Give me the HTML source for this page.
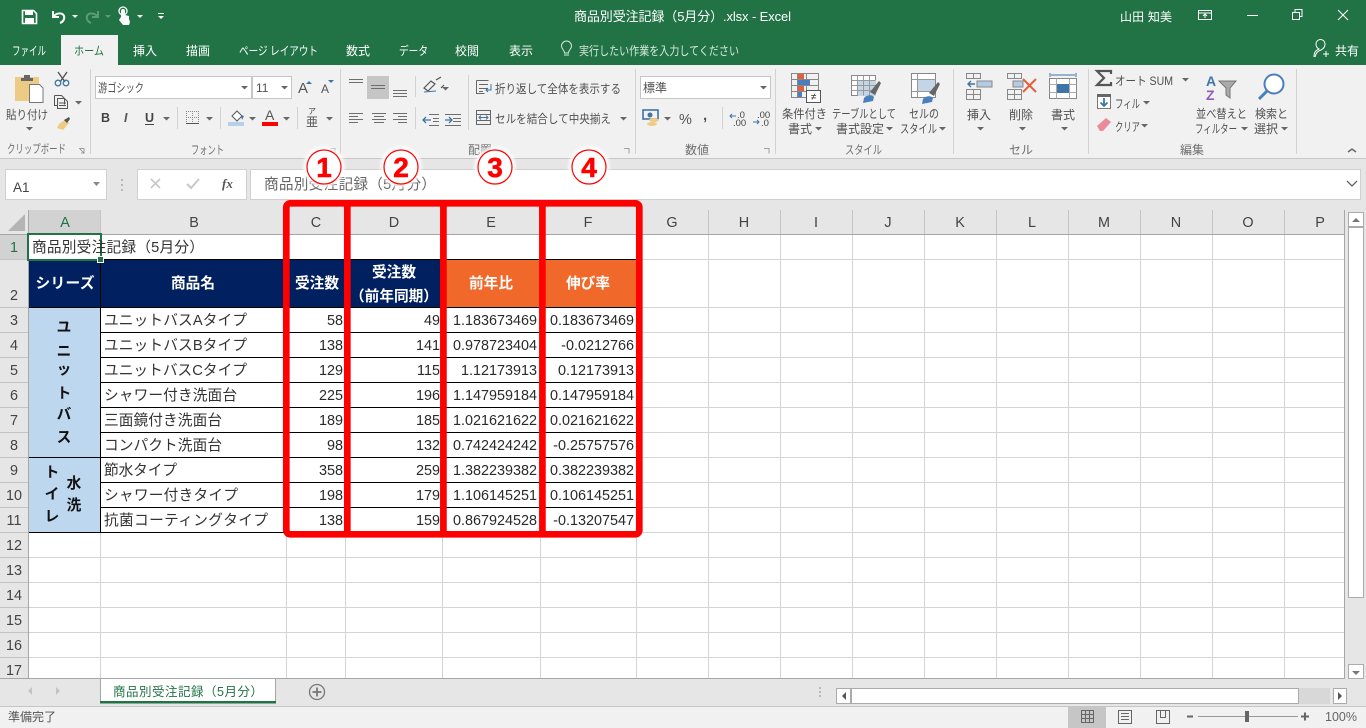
<!DOCTYPE html>
<html lang="ja"><head><meta charset="utf-8"><title>商品別受注記録（5月分）.xlsx - Excel</title>
<style>
html,body{margin:0;padding:0;width:1366px;height:728px;overflow:hidden;background:#e6e6e6}
svg{display:block}
text{font-family:"Liberation Sans","Noto Sans CJK JP",sans-serif}
.r{font-size:12px;fill:#505050}
.g{font-size:12px;fill:#707070}
.t{font-size:12px;fill:#fff}
.c{font-size:14.67px;fill:#333}
.n{font-size:14.4px;fill:#2a2a2a;text-anchor:end}
.h{font-size:14.4px;fill:#444;text-anchor:middle}
.w{font-size:14.67px;fill:#fff;font-weight:700;text-anchor:middle}
.v{font-size:14.67px;fill:#111;font-weight:700;text-anchor:middle}
.circ{font-size:28px;font-weight:700;fill:#f00;text-anchor:middle;stroke:#f00;stroke-width:.6}
</style></head><body>
<svg width="1366" height="728" viewBox="0 0 1366 728" xmlns="http://www.w3.org/2000/svg">
<defs>
<path id="k" d="M0 0h7l-3.500 3.500z" fill="#666"/>
<filter id="sh" x="-30%" y="-30%" width="160%" height="160%"><feGaussianBlur stdDeviation="1.500"/></filter>
</defs>

<!-- title bar and tabs -->
<rect width="1366" height="65" fill="#217346"/>
<rect y="65" width="1366" height="93" fill="#f1f1f1"/>
<rect y="158" width="1366" height="1" fill="#c6c6c6"/>
<rect y="159" width="1366" height="51" fill="#e6e6e6"/>
<rect x="61" y="35" width="57" height="30" fill="#f1f1f1"/>

<!-- QAT -->
<path d="M22.500 10.500h11l3 3v10h-14z" fill="none" stroke="#fff" stroke-width="1.600"/>
<rect x="25" y="10" width="8" height="5" fill="#fff"/><rect x="25" y="18" width="9" height="5" fill="#fff"/>
<path d="M53 11v6h6M53.500 16.500c3-4 9-4 10.500-.5 1 3-1 6-4 7" fill="none" stroke="#fff" stroke-width="2"/>
<path d="M72 15h6l-3 3z" fill="#fff"/>
<path d="M98 11v6h-6M97.500 16.500c-3-4-9-4-10.500-.5-1 3 1 6 4 7" fill="none" stroke="#5c9a78" stroke-width="2"/>
<path d="M105 15h6l-3 3z" fill="#5c9a78"/>
<path d="M121 17v-6a2 2 0 0 1 4 0v4l4 1v3l1 3-1 3h-6l-4-5z" fill="#fff"/><circle cx="123" cy="11" r="4" fill="none" stroke="#fff" stroke-width="1.300"/>
<path d="M137 15h6l-3 3z" fill="#fff"/>
<path d="M158 13h6v1h-6zM158 16h6l-3 3z" fill="#fff"/>

<text class="t" x="574" y="21" style="font-size:13px" textLength="217" lengthAdjust="spacing">商品別受注記録（5月分）.xlsx  -  Excel</text>
<text class="t" x="1120" y="21" textLength="52" lengthAdjust="spacing">山田 知美</text>
<path d="M1198.500 10.500h13v9h-13zM1198.500 13h13M1205 18v-4M1203 16l2-2 2 2" fill="none" stroke="#fff"/>
<path d="M1247 15.500h11" stroke="#fff"/>
<path d="M1292.500 12.500h7v7h-7zM1295 12v-2.500h7v7h-2.500" fill="none" stroke="#fff"/>
<path d="M1338 10l10 10M1348 10l-10 10" stroke="#fff" stroke-width="1.100"/>

<text class="t" x="12" y="55" textLength="34" lengthAdjust="spacingAndGlyphs">ファイル</text>
<text class="t" x="74" y="55" textLength="30" lengthAdjust="spacingAndGlyphs" style="fill:#217346">ホーム</text>
<text class="t" x="133" y="55">挿入</text>
<text class="t" x="186" y="55">描画</text>
<text class="t" x="239" y="55" textLength="79" lengthAdjust="spacingAndGlyphs">ページ レイアウト</text>
<text class="t" x="346" y="55">数式</text>
<text class="t" x="399" y="55" textLength="29" lengthAdjust="spacingAndGlyphs">データ</text>
<text class="t" x="455" y="55">校閲</text>
<text class="t" x="509" y="55">表示</text>
<path d="M564 55h5M564.500 53h4c0-3 3-4 3-7a5 5 0 0 0-10 0c0 3 3 4 3 7z" fill="none" stroke="#d8e8de"/>
<text x="579" y="55" style="font-size:12px;fill:#d8e8de" textLength="160" lengthAdjust="spacingAndGlyphs">実行したい作業を入力してください</text>
<path d="M1314 57c0-6 3-7 5-8-2-1-3-3-3-5a4.500 4.500 0 0 1 9 0c0 3-2 5-4 6-2 .5-5 2-6 7M1323 54h6M1326 51v6" fill="none" stroke="#fff"/>
<text class="t" x="1335" y="55">共有</text>

<!-- ribbon separators -->
<g stroke="#d2d2d2">
<path d="M90.500 69v85M340.500 69v85M635.500 69v85M775.500 69v85M953.500 69v85M1088.500 69v85M1296.500 69v85"/>
<path d="M177.500 107v22M220.500 107v22M297.500 107v22M415.500 76v21M415.500 107v22M468.500 75v55M722.500 107v22"/>
</g>

<!-- clipboard -->
<path d="M15 77h24v24H15z" fill="#eecb85"/>
<path d="M24 75h6v3h3v3H21v-3h3z" fill="#666"/>
<path d="M29.500 84.500h10l3.500 3.500v14.500H29.500z" fill="#fff" stroke="#777"/>
<text class="r" x="6" y="119" textLength="42" lengthAdjust="spacingAndGlyphs">貼り付け</text>
<use href="#k" x="26" y="127"/>
<path d="M58 72l7 10M67 72l-7 10" stroke="#555" stroke-width="1.400"/>
<circle cx="58" cy="83" r="2.800" fill="none" stroke="#3f74a8" stroke-width="1.300"/><circle cx="66" cy="83" r="2.800" fill="none" stroke="#3f74a8" stroke-width="1.300"/>
<path d="M54.500 95.500h7l3 3v6M57.500 98.500h7l3 3v7h-10zM54.500 95.500v10h3M59 103h7M59 105.500h7" fill="none" stroke="#555"/>
<use href="#k" x="75" y="101"/>
<path d="M59 124l7-5 3 4-6 7-6-2z" fill="#eecb85"/><path d="M64 120l5-3 1 2-3 4z" fill="#555"/>

<!-- font -->
<text class="g" x="7" y="153" textLength="59" lengthAdjust="spacingAndGlyphs">クリップボード</text>
<path d="M79 148.500h5v5M84 153l-4-4M81 153h3v-3" fill="none" stroke="#888" stroke-width=".8"/>
<rect x="95.500" y="76.500" width="156" height="22" fill="#fff" stroke="#c6c6c6"/>
<rect x="252.500" y="76.500" width="39" height="22" fill="#fff" stroke="#c6c6c6"/>
<text class="r" x="98" y="92" textLength="46" lengthAdjust="spacingAndGlyphs">游ゴシック</text>
<use href="#k" x="241" y="86"/>
<text class="r" x="256" y="92">11</text>
<use href="#k" x="281" y="86"/>
<text x="298" y="93" style="font-size:15px;fill:#555">A</text><path d="M306 84h6l-3-3z" fill="#3f74a8"/>
<text x="321" y="93" style="font-size:12px;fill:#555">A</text><path d="M328 80h6l-3 3z" fill="#3f74a8"/>
<text x="101" y="122" style="font-size:12.500px;font-weight:700;fill:#444">B</text>
<text x="124" y="122" style="font-size:12.500px;font-style:italic;font-weight:700;fill:#555">I</text>
<text x="145" y="122" style="font-size:12.500px;font-weight:700;fill:#444">U</text><path d="M145 124.500h9" stroke="#444"/>
<use href="#k" x="163" y="117"/>
<path d="M186 111.500h13M186 117.500h13M186 123.500h13M186.500 111v13M192.500 111v13M198.500 111v13" stroke="#888" stroke-dasharray="1 1" fill="none"/><path d="M186 123.500h13" stroke="#555"/>
<use href="#k" x="206" y="117"/>
<rect x="228" y="122" width="16" height="4" fill="#b4d0ea"/>
<path d="M232 116l5-5 5 5-5 5z" fill="#fff" stroke="#555"/><path d="M241 115l3 1-2 4z" fill="#3f74a8"/>
<use href="#k" x="249" y="117"/>
<text x="265" y="120" style="font-size:14px;fill:#555">A</text><rect x="262" y="122" width="16" height="4" fill="#f00"/>
<use href="#k" x="283" y="117"/>
<text x="308" y="114" style="font-size:8px;fill:#444">ア</text>
<text x="306" y="126" style="font-size:12px;fill:#555">亜</text>
<use href="#k" x="326" y="117"/>
<text class="g" x="191" y="154" textLength="33" lengthAdjust="spacingAndGlyphs">フォント</text>
<path d="M330 148.500h5v5" fill="none" stroke="#888" stroke-width=".8"/>

<!-- alignment -->
<rect x="367" y="76" width="22" height="23" fill="#c6c6c6"/>
<path d="M349 79.500h14M349 82.500h14M371 85.500h14M371 88.500h14M393 90.500h14M393 93.500h14M393 96.500h14" stroke="#6e6e6e"/>
<path d="M349 113.500h14M349 116.500h9M349 119.500h14M349 122.500h9M372 113.500h14M374 116.500h10M372 119.500h14M374 122.500h10M393 113.500h14M398 116.500h9M393 119.500h14M398 122.500h9" stroke="#6e6e6e"/>
<path d="M424 88l7-7 4 3-7 7zM436 80l5-3M441 88l3-3" fill="none" stroke="#555" stroke-width="1.200"/><path d="M424 92l12-1" stroke="#3f74a8"/>
<use href="#k" x="442" y="87"/>
<path d="M429 114.500h10M433 118.500h6M433 121.500h6M429 125.500h10" stroke="#6e6e6e"/>
<path d="M423 120h8M426 117l-3 3 3 3" fill="none" stroke="#3f74a8" stroke-width="1.300"/>
<path d="M445 114.500h16M453 118.500h8M453 121.500h8M445 125.500h16" stroke="#6e6e6e"/>
<path d="M445 120h7M449 117l3 3-3 3" fill="none" stroke="#3f74a8" stroke-width="1.300"/>
<path d="M476.500 80.500h12M476.500 80.500v13h8M479 84.500h9M479 88.500h9M479 91.500h4" fill="none" stroke="#666"/>
<path d="M491 84v6h-5M488 88l-2 2 2 2" fill="none" stroke="#3f74a8"/>
<text class="r" x="495" y="93" textLength="126" lengthAdjust="spacingAndGlyphs">折り返して全体を表示する</text>
<path d="M476.500 110.500h14v14h-14zM476.500 114.500h14M476.500 120.500h14" fill="none" stroke="#666"/>
<path d="M479 117.500h9M481 115.500l-2 2 2 2M486 115.500l2 2-2 2" fill="none" stroke="#3f74a8"/>
<text class="r" x="495" y="123" textLength="116" lengthAdjust="spacingAndGlyphs">セルを結合して中央揃え</text>
<use href="#k" x="620" y="117"/>
<text class="g" x="468" y="154">配置</text>
<path d="M624 148.500h5v5" fill="none" stroke="#888" stroke-width=".8"/>

<!-- number -->
<rect x="640.500" y="76.500" width="130" height="22" fill="#fff" stroke="#c6c6c6"/>
<text class="r" x="643" y="92">標準</text>
<use href="#k" x="760" y="86"/>
<rect x="643" y="110" width="15" height="9" fill="none" stroke="#3f74a8" stroke-width="1.600"/><circle cx="650" cy="115" r="2.500" fill="#3f74a8"/>
<ellipse cx="654" cy="120" rx="5" ry="2" fill="#eecb85"/><ellipse cx="652" cy="124" rx="5" ry="2" fill="#eecb85"/>
<use href="#k" x="664" y="117"/>
<text x="679" y="124" style="font-size:14.500px;fill:#555">%</text>
<text x="703" y="120" style="font-size:15px;font-weight:700;fill:#555">,</text>
<text x="737" y="118" style="font-size:9.500px;fill:#444">.0</text><text x="733" y="126" style="font-size:9.500px;fill:#444">.00</text>
<path d="M730 116h6M732 114l-2 2 2 2" fill="none" stroke="#3f74a8"/>
<text x="757" y="118" style="font-size:9.500px;fill:#444">.00</text><text x="761" y="126" style="font-size:9.500px;fill:#444">.0</text>
<path d="M753 122h6M757 120l2 2-2 2" fill="none" stroke="#3f74a8"/>
<text class="g" x="685" y="154">数値</text>
<path d="M764 148.500h5v5" fill="none" stroke="#888" stroke-width=".8"/>

<!-- styles -->
<g fill="none" stroke="#888"><path d="M791.500 73.500h27v24h-27zM791.500 79.500h27M791.500 85.500h27M791.500 91.500h27M797.500 73.500v24M806.500 73.500v24"/></g>
<rect x="798" y="74" width="6" height="5" fill="#e0613b"/><rect x="798" y="80" width="12" height="5" fill="#4a7fbd"/><rect x="798" y="86" width="6" height="5" fill="#e0613b"/><rect x="798" y="92" width="4" height="5" fill="#4a7fbd"/>
<rect x="806.500" y="90.500" width="14" height="12" fill="#fff" stroke="#555"/><text x="813.500" y="100" style="font-size:10px;fill:#333;text-anchor:middle">≠</text>
<text class="r" x="782" y="118" textLength="45" lengthAdjust="spacingAndGlyphs">条件付き</text>
<text class="r" x="788" y="133">書式</text><use href="#k" x="815" y="127"/>
<rect x="851.500" y="75.500" width="24" height="20" fill="#fff" stroke="#888"/>
<rect x="858" y="80" width="18" height="16" fill="#c5d5e8"/>
<path d="M851.500 80.500h24M851.500 85.500h24M851.500 90.500h24M857.500 75.500v20M863.500 75.500v20M869.500 75.500v20" stroke="#999" fill="none"/>
<path d="M870 92l9-11 2 2-6 12z" fill="#666"/><path d="M864 98c2-3 8-4 10-1l-1 4-10 2z" fill="#4a7fbd"/>
<text class="r" x="832" y="118" textLength="64" lengthAdjust="spacingAndGlyphs">テーブルとして</text>
<text class="r" x="836" y="133">書式設定</text><use href="#k" x="886" y="127"/>
<rect x="911.500" y="73.500" width="24" height="24" fill="#fff" stroke="#888"/>
<rect x="917" y="79" width="18" height="12" fill="#c5d5e8"/>
<path d="M911.500 79.500h24M911.500 91.500h24M917.500 73.500v24" stroke="#999" fill="none"/>
<path d="M929 93l9-11 2 2-6 12z" fill="#666"/><path d="M923 99c2-3 8-4 10-1l-1 4-10 2z" fill="#4a7fbd"/>
<text class="r" x="909" y="118" textLength="30" lengthAdjust="spacingAndGlyphs">セルの</text>
<text class="r" x="900" y="133" textLength="37" lengthAdjust="spacingAndGlyphs">スタイル</text><use href="#k" x="939" y="127"/>
<text class="g" x="845" y="154" textLength="37" lengthAdjust="spacingAndGlyphs">スタイル</text>

<!-- cells -->
<path d="M966.500 73.500h14v5h-14zM973.500 73.500v5M966.500 89.500h14v10h-14zM966.500 94.500h14M973.500 89.500v10" fill="none" stroke="#888"/>
<rect x="977" y="81" width="15" height="6" fill="#b4cbe4" stroke="#888"/>
<path d="M968 84h7M971 81l-3 3 3 3" fill="none" stroke="#3f74a8" stroke-width="1.400"/>
<text class="r" x="967" y="119">挿入</text><use href="#k" x="977" y="127"/>
<path d="M1007.500 73.500h14v5h-14zM1014.500 73.500v5M1007.500 89.500h14v10h-14zM1007.500 94.500h14M1014.500 89.500v10" fill="none" stroke="#888"/>
<rect x="1013" y="81" width="10" height="6" fill="#b4cbe4" stroke="#888"/>
<path d="M1023 79l13 13M1036 79l-13 13" stroke="#e0613b" stroke-width="2"/>
<text class="r" x="1009" y="119">削除</text><use href="#k" x="1019" y="127"/>
<path d="M1050 73v4M1076 73v4M1051 75h24" fill="none" stroke="#3f74a8"/>
<rect x="1049.500" y="78.500" width="27" height="20" fill="#fff" stroke="#888"/>
<path d="M1049.500 84.500h27M1049.500 92.500h27M1056.500 78.500v20M1069.500 78.500v20" stroke="#aaa" fill="none"/>
<rect x="1057" y="84" width="12" height="9" fill="#3f74a8"/>
<text class="r" x="1051" y="119">書式</text><use href="#k" x="1061" y="127"/>
<text class="g" x="1009" y="154">セル</text>

<!-- editing -->
<path d="M1111 74v-3h-14l7 7-7 7h14v-3" fill="none" stroke="#555" stroke-width="2.200"/>
<text class="r" x="1115" y="85" textLength="58" lengthAdjust="spacingAndGlyphs">オート SUM</text><use href="#k" x="1182" y="78"/>
<rect x="1097.500" y="94.500" width="13" height="14" fill="#fff" stroke="#777"/><rect x="1097" y="94" width="14" height="3" fill="#666"/>
<path d="M1104 98v8M1100.500 102.500l3.500 3.500 3.500-3.500" fill="none" stroke="#3f74a8" stroke-width="1.800"/>
<text class="r" x="1115" y="108" textLength="25" lengthAdjust="spacingAndGlyphs">フィル</text><use href="#k" x="1143" y="101"/>
<path d="M1097 126l9-8 5 4-8 9h-3z" fill="#eb8a9b"/>
<text class="r" x="1115" y="131" textLength="25" lengthAdjust="spacingAndGlyphs">クリア</text><use href="#k" x="1141" y="124"/>
<text x="1206" y="86" style="font-size:14px;font-weight:700;fill:#3f74a8">A</text>
<text x="1206" y="100" style="font-size:14px;font-weight:700;fill:#8e5fb2">Z</text>
<path d="M1219 81h17l-6 7v10l-4-3v-7z" fill="#aaa" stroke="#777"/>
<text class="r" x="1196" y="118" textLength="51" lengthAdjust="spacingAndGlyphs">並べ替えと</text>
<text class="r" x="1195" y="133" textLength="42" lengthAdjust="spacingAndGlyphs">フィルター</text><use href="#k" x="1241" y="127"/>
<circle cx="1274" cy="84" r="9.500" fill="#fff" stroke="#4a7fbd" stroke-width="2"/><path d="M1267 91l-8 8" stroke="#4a7fbd" stroke-width="3"/>
<text class="r" x="1255" y="118" textLength="33" lengthAdjust="spacingAndGlyphs">検索と</text>
<text class="r" x="1254" y="133">選択</text><use href="#k" x="1281" y="127"/>
<text class="g" x="1180" y="154">編集</text>
<path d="M1348 152l4-3 4 3" fill="none" stroke="#666" stroke-width="1.500"/>

<!-- formula bar -->
<rect x="5.500" y="169.500" width="101" height="30" fill="#fff" stroke="#d0d0d0"/>
<text x="13" y="192" style="font-size:13.500px;fill:#444">A1</text>
<path d="M93 182h7l-3.500 4z" fill="#888"/>
<path d="M122 179v2M122 184v2M122 189v2" stroke="#aaa" stroke-width="1.500"/>
<rect x="137.500" y="169.500" width="109" height="30" fill="#fff" stroke="#d0d0d0"/>
<path d="M151 179l9 9M160 179l-9 9" stroke="#c8c8c8" stroke-width="1.600"/>
<path d="M187 184l4 4 8-9" fill="none" stroke="#c8c8c8" stroke-width="2"/>
<text x="222" y="188" style="font-size:13px;font-family:'Liberation Serif',serif;font-style:italic;font-weight:700;fill:#555">fx</text>
<rect x="250.500" y="169.500" width="1110" height="30" fill="#fff" stroke="#d0d0d0"/>
<text x="264" y="189" style="font-size:14.670px;fill:#666" textLength="172" lengthAdjust="spacing">商品別受注記録（5月分）</text>
<path d="M1347 181l5 5 5-5" fill="none" stroke="#666" stroke-width="1.300"/>

<!-- sheet grid base -->
<rect x="29" y="235" width="1316" height="443" fill="#fff"/>
<rect x="0" y="210" width="1345" height="24" fill="#e6e6e6"/>
<rect x="0" y="235" width="28" height="443" fill="#e6e6e6"/>
<rect x="29" y="210" width="71" height="24" fill="#d2d2d2"/>
<rect x="0" y="235" width="28" height="24" fill="#d2d2d2"/>
<path d="M8 231L25 214V231z" fill="#b4b4b4"/>

<g stroke="#d4d4d4" fill="none">
<path d="M708.500 235V678M780.500 235V678M852.500 235V678M924.500 235V678M996.500 235V678M1068.500 235V678M1140.500 235V678M1212.500 235V678M1284.500 235V678"/>
<path d="M100.500 533V678M286.500 533V678M345.500 533V678M442.500 533V678M540.500 533V678M636.500 533V678"/>
<path d="M637 259.500H1345M637 307.500H1345M637 332.500H1345M637 357.500H1345M637 382.500H1345M637 407.500H1345M637 432.500H1345M637 457.500H1345M637 482.500H1345M637 507.500H1345"/>
<path d="M29 557.500H1345M29 582.500H1345M29 607.500H1345M29 632.500H1345M29 657.500H1345M637 532.500H1345"/>
<path d="M286.500 235V259M345.500 235V259M442.500 235V259M540.500 235V259M636.500 235V259"/>
</g>
<g stroke="#c4c4c4" fill="none">
<path d="M100.500 210V234M286.500 210V234M345.500 210V234M442.500 210V234M540.500 210V234M636.500 210V234M708.500 210V234M780.500 210V234M852.500 210V234M924.500 210V234M996.500 210V234M1068.500 210V234M1140.500 210V234M1212.500 210V234M1284.500 210V234"/>
<path d="M0 259.500H28M0 307.500H28M0 332.500H28M0 357.500H28M0 382.500H28M0 407.500H28M0 432.500H28M0 457.500H28M0 482.500H28M0 507.500H28M0 532.500H28M0 557.500H28M0 582.500H28M0 607.500H28M0 632.500H28M0 657.500H28"/>
</g>
<path d="M0 234.500H1345M28.500 210V678M1344.500 210V678M0 678.500H1345" stroke="#a6a6a6" fill="none"/>

<!-- column/row labels -->
<text class="h" x="65" y="227" style="fill:#217346">A</text>
<text class="h" x="194" y="227">B</text><text class="h" x="316" y="227">C</text><text class="h" x="394" y="227">D</text><text class="h" x="491" y="227">E</text><text class="h" x="588" y="227">F</text>
<text class="h" x="672" y="227">G</text><text class="h" x="744" y="227">H</text><text class="h" x="816" y="227">I</text><text class="h" x="888" y="227">J</text><text class="h" x="960" y="227">K</text><text class="h" x="1032" y="227">L</text><text class="h" x="1104" y="227">M</text><text class="h" x="1176" y="227">N</text><text class="h" x="1248" y="227">O</text><text class="h" x="1320" y="227">P</text>
<text class="h" x="14" y="252" style="fill:#217346">1</text><text class="h" x="14" y="300">2</text><text class="h" x="14" y="325">3</text><text class="h" x="14" y="350">4</text><text class="h" x="14" y="375">5</text><text class="h" x="14" y="400">6</text><text class="h" x="14" y="425">7</text><text class="h" x="14" y="450">8</text><text class="h" x="14" y="475">9</text><text class="h" x="14" y="500">10</text><text class="h" x="14" y="525">11</text><text class="h" x="14" y="550">12</text><text class="h" x="14" y="575">13</text><text class="h" x="14" y="600">14</text><text class="h" x="14" y="625">15</text><text class="h" x="14" y="650">16</text><text class="h" x="14" y="675">17</text>

<!-- table fills -->
<rect x="29" y="260" width="414" height="48" fill="#002060"/>
<rect x="443" y="260" width="194" height="48" fill="#f0692a"/>
<rect x="29" y="308" width="71" height="224" fill="#bdd7ee"/>
<!-- table lines -->
<g stroke="#000" fill="none">
<path d="M29 259.500H637M29 307.500H637M29 457.500H637M29 532.500H637"/>
<path d="M101 332.500H637M101 357.500H637M101 382.500H637M101 407.500H637M101 432.500H637M101 482.500H637M101 507.500H637"/>
<path d="M100.500 260V533M286.500 308V533M345.500 308V533M442.500 308V533M540.500 308V533M636.500 260V533"/>
</g>

<!-- header text -->
<text class="w" x="65" y="288" textLength="59" lengthAdjust="spacing">シリーズ</text>
<text class="w" x="193" y="288">商品名</text>
<text class="w" x="317" y="288">受注数</text>
<text class="w" x="394" y="277">受注数</text>
<text class="w" x="394" y="301">（前年同期）</text>
<text class="w" x="491" y="288">前年比</text>
<text class="w" x="588" y="288">伸び率</text>

<!-- merged col A -->
<text class="v" x="64" y="332">ユ</text>
<text class="v" x="64" y="356">ニ</text>
<text class="v" x="64" y="374">ッ</text>
<text class="v" x="64" y="398">ト</text>
<text class="v" x="64" y="419">バ</text>
<text class="v" x="64" y="442">ス</text>
<text class="v" x="52" y="477">ト</text>
<text class="v" x="52" y="499">イ</text>
<text class="v" x="52" y="521">レ</text>
<text class="v" x="74" y="488">水</text>
<text class="v" x="74" y="510">洗</text>

<!-- body -->
<text class="c" x="104" y="325" textLength="143" lengthAdjust="spacing">ユニットバスAタイプ</text>
<text class="c" x="104" y="350" textLength="143" lengthAdjust="spacing">ユニットバスBタイプ</text>
<text class="c" x="104" y="375" textLength="143" lengthAdjust="spacing">ユニットバスCタイプ</text>
<text class="c" x="104" y="400" textLength="133" lengthAdjust="spacing">シャワー付き洗面台</text>
<text class="c" x="104" y="425" textLength="118" lengthAdjust="spacing">三面鏡付き洗面台</text>
<text class="c" x="104" y="450" textLength="118" lengthAdjust="spacing">コンパクト洗面台</text>
<text class="c" x="104" y="475" textLength="73" lengthAdjust="spacing">節水タイプ</text>
<text class="c" x="104" y="500" textLength="134" lengthAdjust="spacing">シャワー付きタイプ</text>
<text class="c" x="104" y="525" textLength="164" lengthAdjust="spacing">抗菌コーティングタイプ</text>

<text class="n" x="343" y="325">58</text><text class="n" x="343" y="350">138</text><text class="n" x="343" y="375">129</text><text class="n" x="343" y="400">225</text><text class="n" x="343" y="425">189</text><text class="n" x="343" y="450">98</text><text class="n" x="343" y="475">358</text><text class="n" x="343" y="500">198</text><text class="n" x="343" y="525">138</text>
<text class="n" x="440" y="325">49</text><text class="n" x="440" y="350">141</text><text class="n" x="440" y="375">115</text><text class="n" x="440" y="400">196</text><text class="n" x="440" y="425">185</text><text class="n" x="440" y="450">132</text><text class="n" x="440" y="475">259</text><text class="n" x="440" y="500">179</text><text class="n" x="440" y="525">159</text>
<text class="n" x="537" y="325">1.183673469</text><text class="n" x="537" y="350">0.978723404</text><text class="n" x="537" y="375">1.12173913</text><text class="n" x="537" y="400">1.147959184</text><text class="n" x="537" y="425">1.021621622</text><text class="n" x="537" y="450">0.742424242</text><text class="n" x="537" y="475">1.382239382</text><text class="n" x="537" y="500">1.106145251</text><text class="n" x="537" y="525">0.867924528</text>
<text class="n" x="634" y="325">0.183673469</text><text class="n" x="634" y="350">-0.0212766</text><text class="n" x="634" y="375">0.12173913</text><text class="n" x="634" y="400">0.147959184</text><text class="n" x="634" y="425">0.021621622</text><text class="n" x="634" y="450">-0.25757576</text><text class="n" x="634" y="475">0.382239382</text><text class="n" x="634" y="500">0.106145251</text><text class="n" x="634" y="525">-0.13207547</text>

<!-- A1 -->
<rect x="28" y="234" width="73" height="26" fill="none" stroke="#217346" stroke-width="2"/>
<rect x="97.500" y="256.500" width="6" height="6" fill="#217346" stroke="#fff"/>
<text class="c" x="32" y="252" textLength="172" lengthAdjust="spacing">商品別受注記録（5月分）</text>

<!-- scrollbars -->
<rect x="1346" y="210" width="20" height="469" fill="#e6e6e6"/>
<rect x="1348.500" y="212.500" width="15" height="14" fill="#fff" stroke="#ababab"/>
<path d="M1352 222h8l-4-4z" fill="#777"/>
<rect x="1348.500" y="227.500" width="15" height="370" fill="#fff" stroke="#ababab"/>
<rect x="1348.500" y="664.500" width="15" height="14" fill="#fff" stroke="#ababab"/>
<path d="M1352 671h8l-4 4z" fill="#777"/>

<rect y="679" width="1366" height="27" fill="#e6e6e6"/>
<path d="M0 706.500H1366" stroke="#c6c6c6"/>
<rect y="707" width="1366" height="21" fill="#f1f1f1"/>
<path d="M32 687l-4 4 4 4zM56 687l4 4-4 4z" fill="#c4c4c4"/>
<rect x="100" y="679" width="176" height="24" fill="#fff"/>
<path d="M100.500 679v24M275.500 679v24" stroke="#a6a6a6"/>
<rect x="100" y="701" width="176" height="2.500" fill="#217346"/>
<text x="113" y="696" style="font-size:12.500px;fill:#217346" textLength="150" lengthAdjust="spacing">商品別受注記録（5月分）</text>
<circle cx="317" cy="692" r="7.500" fill="none" stroke="#777" stroke-width="1.300"/>
<path d="M312.500 692h9M317 687.500v9" stroke="#777" stroke-width="1.800"/>
<path d="M820 687v2M820 691v2M820 695v2" stroke="#aaa" stroke-width="1.500"/>
<rect x="851" y="688" width="479" height="16" fill="#d8d8d8"/>
<rect x="836.500" y="688.500" width="14" height="15" fill="#fff" stroke="#ababab"/>
<path d="M846 692v8l-4-4z" fill="#555"/>
<rect x="851.500" y="688.500" width="447" height="15" fill="#fff" stroke="#ababab"/>
<rect x="1333.500" y="688.500" width="13" height="15" fill="#fff" stroke="#ababab"/>
<path d="M1338 692v8l4-4z" fill="#555"/>

<!-- status bar -->
<text x="8" y="721" style="font-size:12px;fill:#555" textLength="48" lengthAdjust="spacing">準備完了</text>
<rect x="1068" y="707" width="38" height="21" fill="#c6c6c6"/>
<path d="M1081.500 710.500h12v12h-12zM1081.500 714.500h12M1081.500 718.500h12M1085.500 710.500v12M1089.500 710.500v12" fill="none" stroke="#666"/>
<path d="M1118.500 710.500h13v13h-13zM1121 713.500h8M1121 716.500h8M1121 719.500h8" fill="none" stroke="#666"/>
<path d="M1156.500 710.500h13v13h-13zM1160.500 710.500v7h5v-7" fill="none" stroke="#666"/>
<path d="M1187 716.500h6" stroke="#666" stroke-width="2"/>
<path d="M1198 716.500h100" stroke="#999"/>
<rect x="1245" y="711" width="4" height="11" fill="#666"/>
<path d="M1301 716.500h8M1305 712.500v8" stroke="#666" stroke-width="2"/>
<text x="1325" y="721" style="font-size:12.500px;fill:#666">100%</text>

<!-- red annotation -->
<g fill="none" stroke="#f00" stroke-width="6.700">
<rect x="286.300" y="203.300" width="353" height="331" rx="4"/>
<path d="M347.300 203V534M443.400 203V534M542.400 203V534"/>
</g>
<g>
<circle cx="324" cy="167" r="20.500" fill="#fff" fill-opacity=".9" filter="url(#sh)"/>
<circle cx="324" cy="167" r="17" fill="#fff" fill-opacity=".55" stroke="#f00" stroke-width="1.200"/>
<text class="circ" x="324" y="177">1</text>
<circle cx="401" cy="167" r="20.500" fill="#fff" fill-opacity=".9" filter="url(#sh)"/>
<circle cx="401" cy="167" r="17" fill="#fff" fill-opacity=".55" stroke="#f00" stroke-width="1.200"/>
<text class="circ" x="401" y="177">2</text>
<circle cx="495" cy="167" r="20.500" fill="#fff" fill-opacity=".9" filter="url(#sh)"/>
<circle cx="495" cy="167" r="17" fill="#fff" fill-opacity=".55" stroke="#f00" stroke-width="1.200"/>
<text class="circ" x="495" y="177">3</text>
<circle cx="589" cy="167" r="20.500" fill="#fff" fill-opacity=".9" filter="url(#sh)"/>
<circle cx="589" cy="167" r="17" fill="#fff" fill-opacity=".55" stroke="#f00" stroke-width="1.200"/>
<text class="circ" x="589" y="177">4</text>
</g>
</svg>
</body></html>
